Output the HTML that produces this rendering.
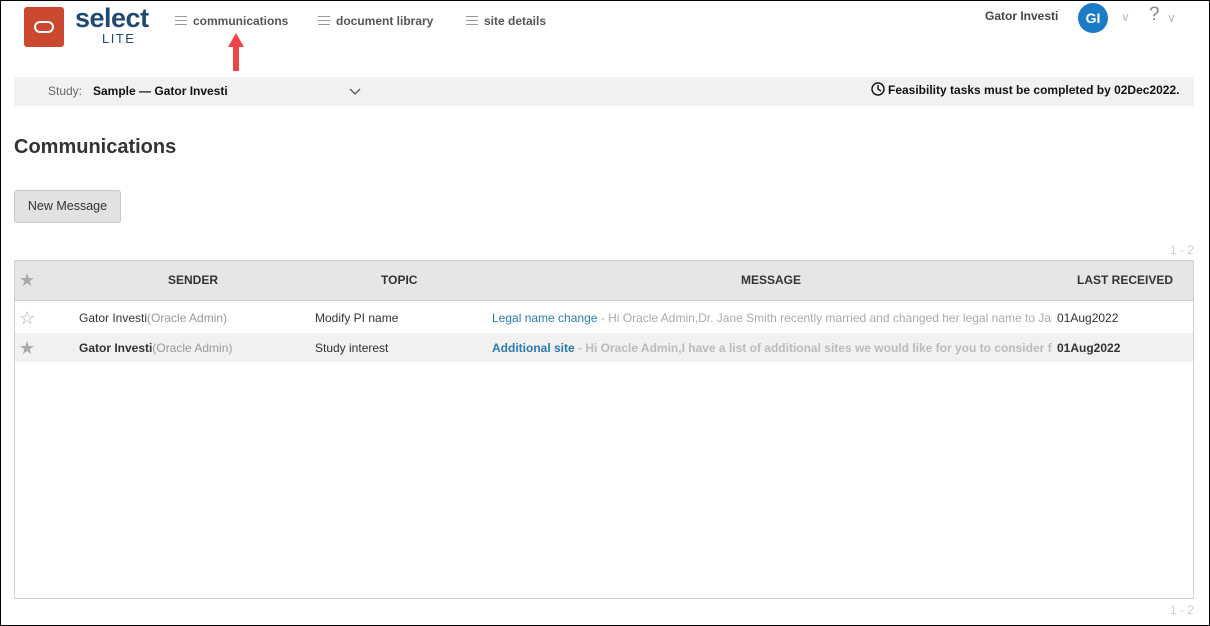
<!DOCTYPE html>
<html><head><style>
*{margin:0;padding:0;box-sizing:border-box}
body{width:1210px;height:626px;position:relative;overflow:hidden;background:#fff;font-family:"Liberation Sans",sans-serif}
.a{position:absolute;white-space:nowrap}
.nav{font-size:12px;font-weight:bold;color:#555;top:14px}
.nav .ic{display:inline-block;width:12px;height:9px;margin-right:6px;vertical-align:0;background:linear-gradient(#999 0 1px,transparent 1px 4px,#999 4px 5px,transparent 5px 8px,#999 8px 9px)}
.th{font-size:12px;font-weight:bold;color:#333;top:273px}
.td{font-size:12px;color:#333}
.g{color:#999}
</style></head><body>
<div class="a" style="left:0;top:0;width:1210px;height:626px;border:1px solid #000"></div>
<div class="a" style="left:24px;top:7px;width:40px;height:40px;background:#c9482f;border-radius:3px"></div>
<div class="a" style="left:34px;top:21px;width:20px;height:12px;border:2.5px solid #fff;border-radius:6px"></div>
<div class="a" style="left:75px;top:3px;font-size:27px;font-weight:bold;color:#1f4a72;letter-spacing:-0.5px">select</div>
<div class="a" style="left:102px;top:31px;font-size:13px;color:#1f4a72;letter-spacing:1.5px">LITE</div>
<div class="a nav" style="left:175px"><span class="ic"></span>communications</div>
<div class="a nav" style="left:318px"><span class="ic"></span>document library</div>
<div class="a nav" style="left:466px"><span class="ic"></span>site details</div>
<svg class="a" style="left:227px;top:33px" width="18" height="38"><polygon points="9,0 17,14 12,14 12,38 6,38 6,14 1,14" fill="#f0434a"/></svg>
<div class="a" style="left:985px;top:9px;font-size:12px;font-weight:bold;color:#444">Gator Investi</div>
<div class="a" style="left:1078px;top:3px;width:30px;height:30px;border-radius:50%;background:#1a7bc7;color:#fff;font-weight:bold;font-size:14px;text-align:center;line-height:30px">GI</div>
<div class="a" style="left:1121px;top:10px;color:#bbb;font-size:12px">∨</div>
<div class="a" style="left:1149px;top:4px;color:#888;font-size:19px">?</div>
<div class="a" style="left:1167px;top:11px;color:#bbb;font-size:12px">∨</div>
<div class="a" style="left:14px;top:77px;width:1180px;height:29px;background:#f1f1f1"></div>
<div class="a" style="left:48px;top:84px;font-size:12px;color:#666">Study:</div>
<div class="a" style="left:93px;top:84px;font-size:12px;color:#111;font-weight:bold">Sample — Gator Investi</div>
<svg class="a" style="left:349px;top:88px" width="12" height="8"><polyline points="1,1 6,6 11,1" fill="none" stroke="#555" stroke-width="1.3"/></svg>
<svg class="a" style="left:871px;top:82px" width="14" height="14"><circle cx="7" cy="7" r="6" fill="none" stroke="#111" stroke-width="1.4"/><polyline points="7,3 7,7 10,9" fill="none" stroke="#111" stroke-width="1.4"/></svg>
<div class="a" style="left:888px;top:83px;font-size:12px;font-weight:bold;color:#111">Feasibility tasks must be completed by 02Dec2022.</div>
<div class="a" style="left:14px;top:136px;font-size:20px;font-weight:bold;color:#333">Communications</div>
<div class="a" style="left:14px;top:190px;width:107px;height:33px;background:#e2e2e2;border:1px solid #c8c8c8;border-radius:3px;font-size:12.5px;color:#333;text-align:center;line-height:31px">New Message</div>
<div class="a" style="right:16px;top:243px;font-size:12px;color:#ccc">1 - 2</div>
<div class="a" style="left:14px;top:260px;width:1180px;height:339px;border:1px solid #d0d0d0"></div>
<div class="a" style="left:15px;top:261px;width:1178px;height:40px;background:#e6e6e6;border-bottom:1px solid #d0d0d0"></div>
<div class="a" style="left:15px;top:333px;width:1178px;height:29px;background:#f1f1f1"></div>
<div class="a" style="left:19px;top:270px;font-size:18px;color:#aaa">★</div>
<div class="a th" style="left:168px">SENDER</div>
<div class="a th" style="left:381px">TOPIC</div>
<div class="a th" style="left:741px">MESSAGE</div>
<div class="a th" style="left:1077px">LAST RECEIVED</div>
<div class="a" style="left:19px;top:308px;font-size:18px;color:#aaa">☆</div>
<div class="a td" style="left:79px;top:311px">Gator Investi<span class="g">(Oracle Admin)</span></div>
<div class="a td" style="left:315px;top:311px">Modify PI name</div>
<div class="a td" style="left:492px;top:311px;width:560px;overflow:hidden"><span style="color:#2a7ab0">Legal name change</span><span style="color:#aaa"> - Hi Oracle Admin,Dr. Jane Smith recently married and changed her legal name to Jane</span></div>
<div class="a td" style="left:1057px;top:311px">01Aug2022</div>
<div class="a" style="left:19px;top:338px;font-size:18px;color:#aaa">★</div>
<div class="a td" style="left:79px;top:341px"><b>Gator Investi</b><span class="g">(Oracle Admin)</span></div>
<div class="a td" style="left:315px;top:341px">Study interest</div>
<div class="a td" style="left:492px;top:341px;width:560px;overflow:hidden;font-weight:bold"><span style="color:#2a7ab0">Additional site</span><span style="color:#bbb"> - Hi Oracle Admin,I have a list of additional sites we would like for you to consider for</span></div>
<div class="a td" style="left:1057px;top:341px;font-weight:bold">01Aug2022</div>
<div class="a" style="right:16px;top:603px;font-size:12px;color:#ccc">1 - 2</div>
</body></html>
